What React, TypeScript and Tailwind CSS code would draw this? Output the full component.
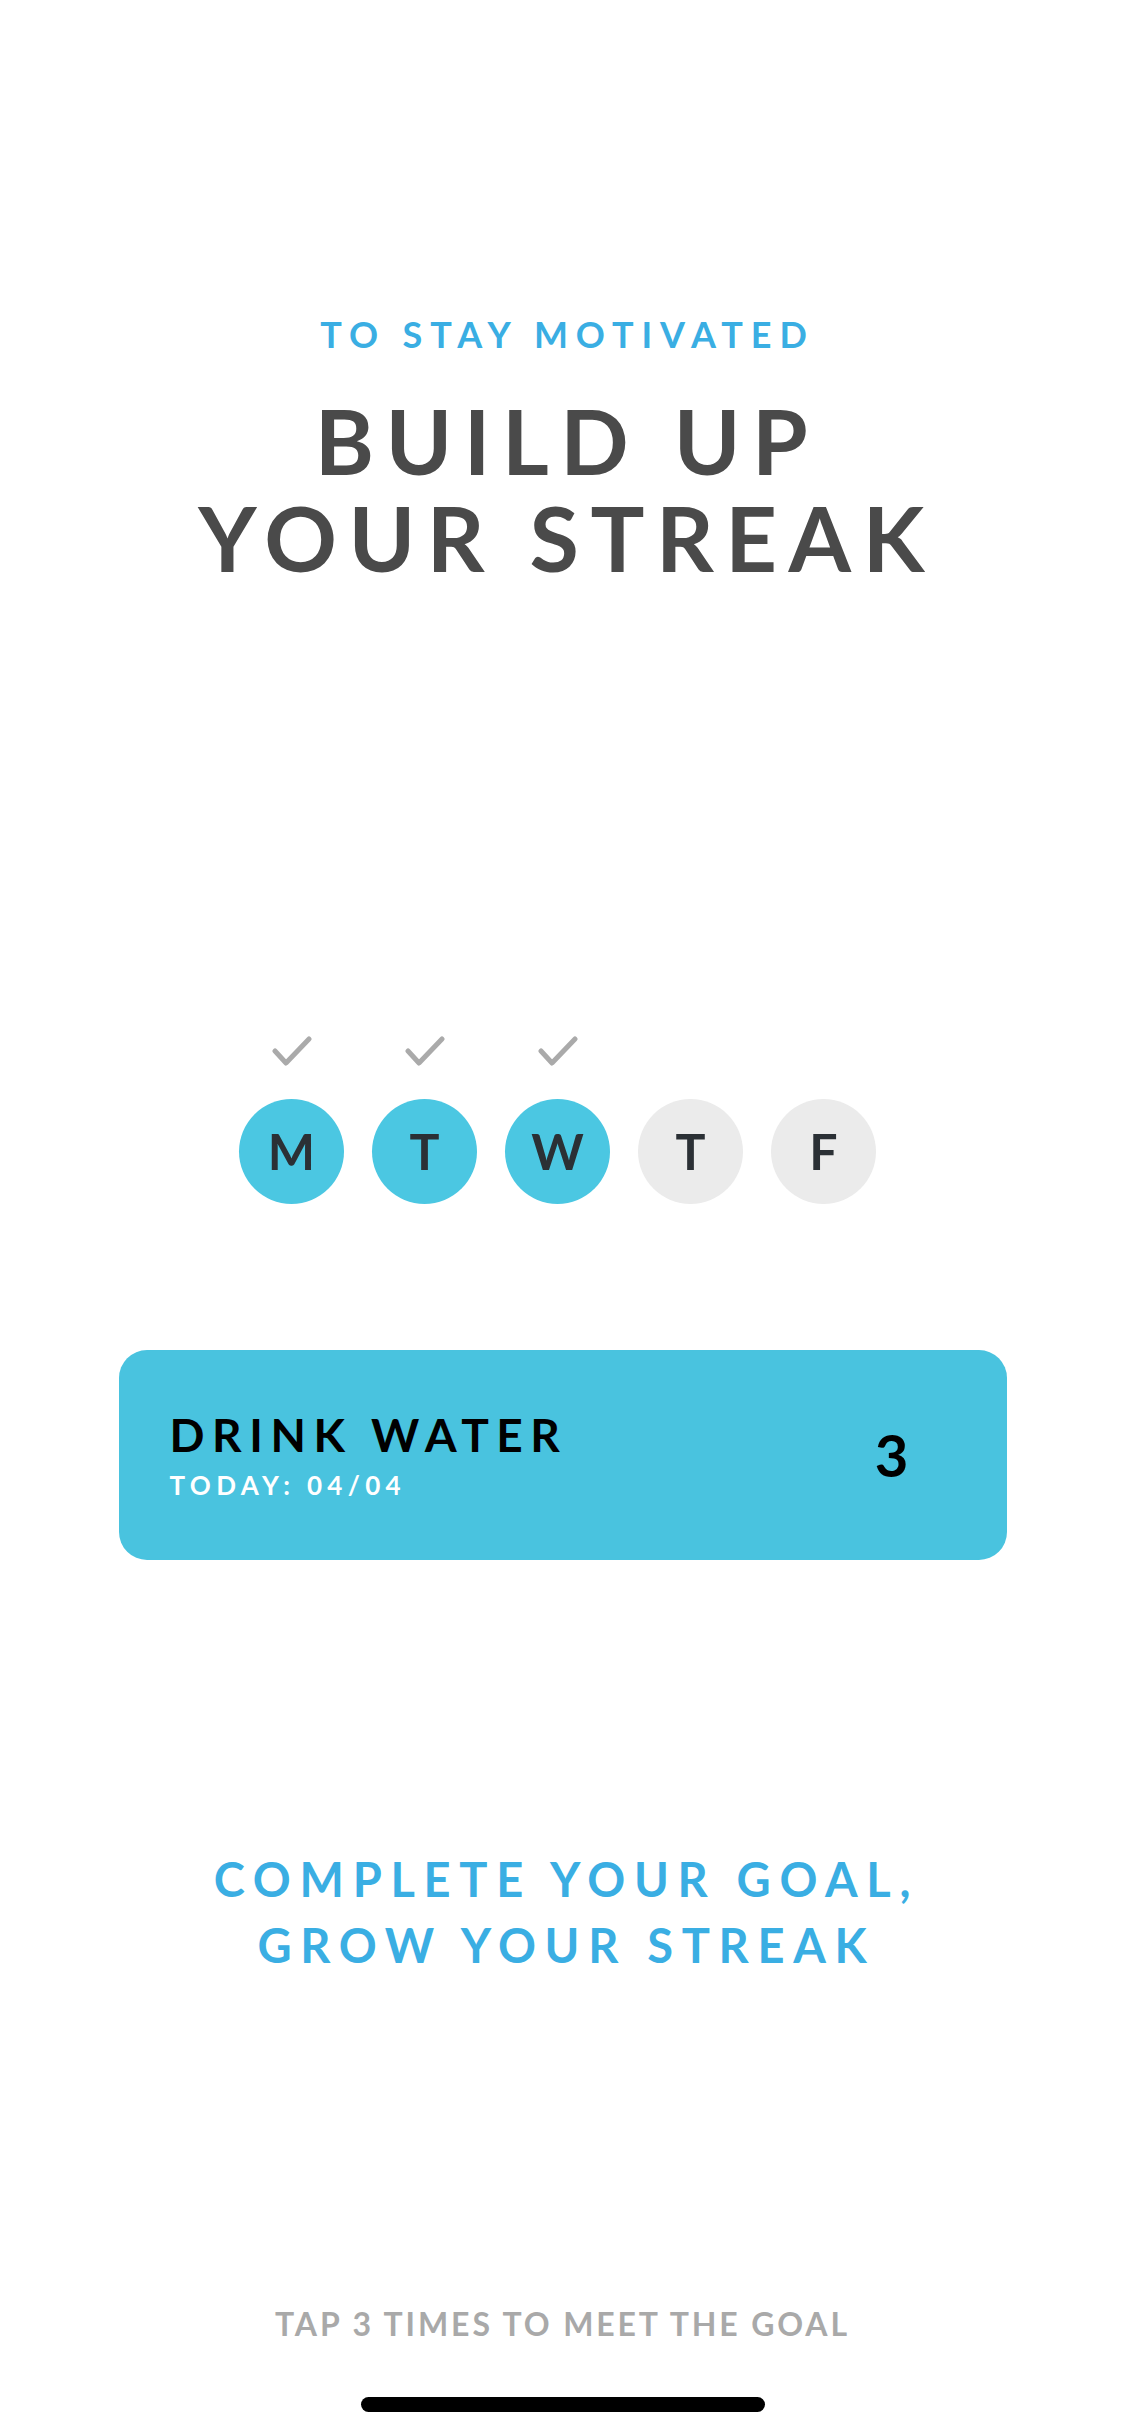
const days = [
  { label: "M", done: true },
  { label: "T", done: true },
  { label: "W", done: true },
  { label: "T", done: false },
  { label: "F", done: false },
];

const Check = () => (
  <svg width="40" height="30" viewBox="0 0 40 30" fill="none">
    <path
      d="M3 15 L14 27 L37 3"
      stroke="#aaaaaa"
      strokeWidth="5"
      strokeLinecap="round"
      strokeLinejoin="round"
    />
  </svg>
);

const App = () => {
  return (
    <div
      className="relative flex flex-col items-center w-[1125px] h-[2436px] bg-white"
      style={{ fontFamily: "Lato, 'Noto Sans', sans-serif" }}
    >
      <p className="mt-[316px] pl-[10px] text-[36px] leading-[36px] font-bold tracking-[0.22em] text-[#3aaee3]">
        TO STAY MOTIVATED
      </p>
      <h1 className="mt-[40px] pl-[9px] text-center text-[90px] leading-[97px] font-bold tracking-[0.128em] text-[#4a4a4a]">
        BUILD UP
        <br />
        YOUR STREAK
      </h1>

      {/* week streak */}
      <div className="mt-[450px] mr-[10px] flex flex-col">
        <div className="flex gap-[28px] h-[30px]">
          {days.map((d, i) => (
            <div key={i} className="w-[105px] flex justify-center">
              {d.done && <Check />}
            </div>
          ))}
        </div>
        <div className="mt-[33px] flex gap-[28px]">
          {days.map((d, i) => (
            <div
              key={i}
              className={
                "w-[105px] h-[105px] rounded-full flex items-center justify-center text-[50px] font-bold text-[#2b3035] " +
                (d.done ? "bg-[#4bc7e2]" : "bg-[#ebebeb]")
              }
            >
              {d.label}
            </div>
          ))}
        </div>
      </div>

      {/* goal card */}
      <div className="mt-[146px] w-[888px] h-[210px] rounded-[28px] bg-[#49c3df] flex items-center justify-between pl-[51px] pr-[98px]">
        <div className="flex flex-col">
          <span className="text-[46px] leading-[46px] font-bold tracking-[0.165em] text-black">
            DRINK WATER
          </span>
          <span className="mt-[14px] text-[26px] leading-[26px] font-bold tracking-[0.205em] text-white">
            TODAY: 04/04
          </span>
        </div>
        <span className="text-[58px] leading-[58px] font-bold text-black">3</span>
      </div>

      <p className="mt-[286px] pl-[8px] text-center text-[47px] leading-[66px] font-bold tracking-[0.185em] text-[#3aaee3]">
        COMPLETE YOUR GOAL,
        <br />
        GROW YOUR STREAK
      </p>

      <p className="mt-[330px] text-[32px] leading-[32px] font-bold tracking-[0.09em] text-[#a9a9a9]">
        TAP 3 TIMES TO MEET THE GOAL
      </p>

      <div className="mt-[57px] w-[404px] h-[15px] rounded-full bg-black" />
    </div>
  );
};

export default App;
